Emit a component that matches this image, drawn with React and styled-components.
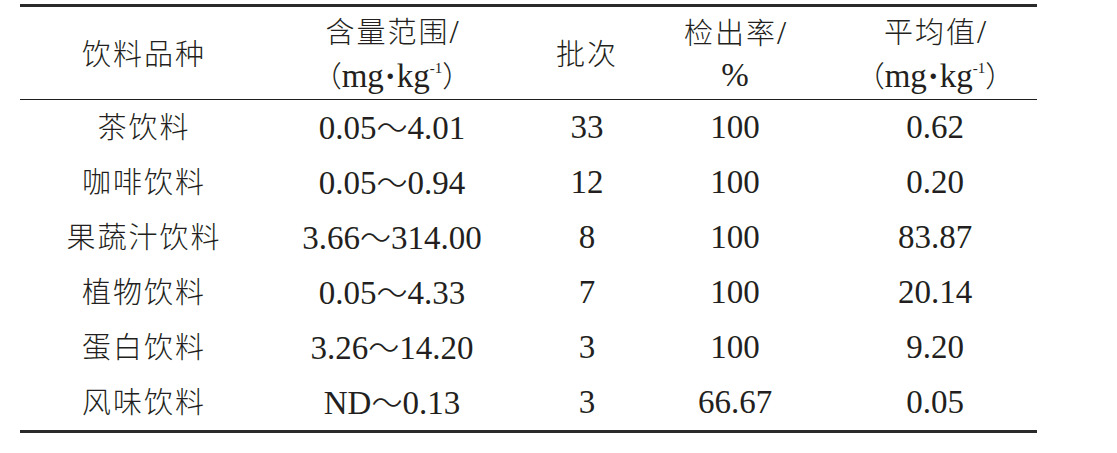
import React from "react";
import styled, { createGlobalStyle } from "styled-components";

const Global = createGlobalStyle`
  html, body { margin: 0; padding: 0; background: #ffffff; }
  body { font-family: "Liberation Serif", "Times New Roman", Tinos, "DejaVu Serif", serif; color: #231f20; }
`;

const Page = styled.div`
  padding: 4px 0 0 20px;
  width: 1017px;
`;

const Table = styled.table`
  width: 1017px;
  table-layout: fixed;
  border-collapse: collapse;
  border-top: 3px solid #2a2a2a;
  border-bottom: 3px solid #2a2a2a;
  font-family: "Liberation Serif", "Times New Roman", Tinos, "DejaVu Serif", serif;
  font-size: 33px;
  color: #231f20;
`;

const HeadRow = styled.tr`
  border-bottom: 1px solid #1e1e1e;
`;

const Th = styled.th`
  height: 92px;
  padding: 0 0 0 ${(p) => (p.$shift ? p.$shift : 0)}px;
  font-weight: normal;
  text-align: center;
  vertical-align: middle;
  line-height: 42px;
  white-space: nowrap;
`;

const Td = styled.td`
  height: 55px;
  padding: 0 0 0 ${(p) => (p.$shift ? p.$shift : 0)}px;
  text-align: center;
  vertical-align: middle;
  line-height: 1;
  white-space: nowrap;
`;

const Cjk = styled.span`
  font-family: "Noto Sans CJK SC", sans-serif;
  font-weight: 300;
  font-size: 29px;
  letter-spacing: 2px;
`;

const Tilde = styled.span`
  font-family: "Noto Sans CJK SC", sans-serif;
  font-weight: 300;
  font-size: 31px;
`;

const Paren = styled.span`
  font-family: "Noto Sans CJK SC", sans-serif;
  font-weight: 300;
  font-size: 29px;
`;

const Sup = styled.sup`
  font-size: 15px;
  vertical-align: 14px;
  line-height: 0;
`;

const Dot = styled.span`
  font-weight: bold;
  padding: 0 1px;
`;

const Unit = () => (
  <>
    <Paren>（</Paren>mg<Dot>·</Dot>kg<Sup>-1</Sup>
    <Paren>）</Paren>
  </>
);

const rows = [
  ["茶饮料", "0.05", "4.01", "33", "100", "0.62"],
  ["咖啡饮料", "0.05", "0.94", "12", "100", "0.20"],
  ["果蔬汁饮料", "3.66", "314.00", "8", "100", "83.87"],
  ["植物饮料", "0.05", "4.33", "7", "100", "20.14"],
  ["蛋白饮料", "3.26", "14.20", "3", "100", "9.20"],
  ["风味饮料", "ND", "0.13", "3", "66.67", "0.05"],
];

export default function App() {
  return (
    <>
      <Global />
      <Page>
        <Table>
          <colgroup>
            <col style={{ width: 248 }} />
            <col style={{ width: 248 }} />
            <col style={{ width: 142 }} />
            <col style={{ width: 154 }} />
            <col style={{ width: 225 }} />
          </colgroup>
          <thead>
            <HeadRow>
              <Th>
                <Cjk>饮料品种</Cjk>
              </Th>
              <Th>
                <Cjk>含量范围</Cjk>/
                <br />
                <Unit />
              </Th>
              <Th>
                <Cjk>批次</Cjk>
              </Th>
              <Th>
                <Cjk>检出率</Cjk>/
                <br />%
              </Th>
              <Th $shift={21}>
                <Cjk>平均值</Cjk>/
                <br />
                <Unit />
              </Th>
            </HeadRow>
          </thead>
          <tbody>
            {rows.map((r) => (
              <tr key={r[0]}>
                <Td>
                  <Cjk>{r[0]}</Cjk>
                </Td>
                <Td>
                  {r[1]}
                  <Tilde>～</Tilde>
                  {r[2]}
                </Td>
                <Td>{r[3]}</Td>
                <Td>{r[4]}</Td>
                <Td $shift={21}>{r[5]}</Td>
              </tr>
            ))}
          </tbody>
        </Table>
      </Page>
    </>
  );
}
